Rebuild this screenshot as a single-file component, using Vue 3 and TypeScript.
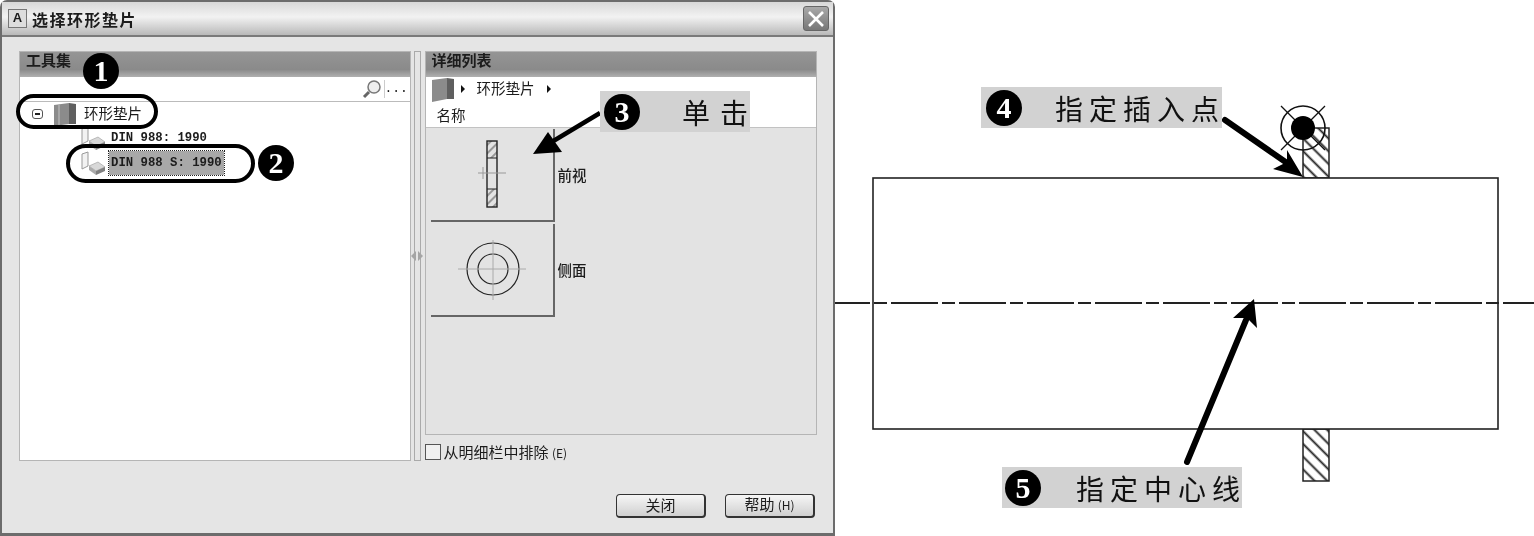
<script setup lang="ts">
const treeItems = [
  { id: 'din988', label: 'DIN 988: 1990', selected: false },
  { id: 'din988s', label: 'DIN 988 S: 1990', selected: true },
]
</script>

<template>
  <div class="page">
    <section class="dialog">
      <header class="titlebar">
        <span class="app-icon">A</span>
        <h1>选择环形垫片</h1>
        <button class="close-btn" aria-label="关闭">
          <svg width="18" height="18" viewBox="0 0 18 18">
            <path d="M2 2 L16 16 M16 2 L2 16" stroke="#fff" stroke-width="2.6" />
          </svg>
        </button>
      </header>

      <div class="body">
        <div class="columns">
          <div class="panel tools">
            <div class="panel-head">工具集</div>
            <div class="search-row">
              <svg width="20" height="20" viewBox="0 0 20 20">
                <circle cx="12" cy="8" r="6" fill="#eee" stroke="#777" stroke-width="1.5" />
                <path d="M7 13 L2 18" stroke="#666" stroke-width="3" />
              </svg>
              <span class="dots">...</span>
            </div>
            <div class="tree">
              <div class="tree-root">
                <span class="minus"></span>
                <svg class="book" width="24" height="24" viewBox="0 0 24 24">
                  <path d="M1 3 L16 1 L16 22 L1 24 Z" fill="#8b8b8b" />
                  <path d="M16 1 L23 2 L23 22 L16 22 Z" fill="#5f5f5f" />
                  <path d="M6 3 V23" stroke="#b0b0b0" stroke-width="1.5" />
                </svg>
                <span class="root-label">环形垫片</span>
              </div>
              <div
                v-for="item in treeItems"
                :key="item.id"
                class="tree-item"
                :class="{ selected: item.selected }"
              >
                <svg width="26" height="24" viewBox="0 0 26 24">
                  <path d="M2 3 L8 1 V15 L2 18 Z" fill="#f2f2f2" stroke="#999" />
                  <path d="M9 15 L18 11 L25 16 L16 20 Z" fill="#d8d8d8" stroke="#999" stroke-width="0.6" />
                  <path d="M16 20 L25 16 V20 L16 24 Z" fill="#808080" />
                  <path d="M9 15 L16 20 V24 L9 19 Z" fill="#aaa" />
                </svg>
                <span class="item-label">{{ item.label }}</span>
              </div>
            </div>
          </div>

          <div class="splitter">
            <svg width="14" height="10" viewBox="0 0 14 10">
              <path d="M6 0 V10 L1 5 Z M8 0 V10 L13 5 Z" fill="#a5a5a5" />
            </svg>
          </div>

          <div class="right-col">
            <div class="panel details">
              <div class="panel-head">详细列表</div>
              <div class="crumbs">
                <svg width="24" height="25" viewBox="0 0 24 25">
                  <path d="M1 3 L16 1 L16 22 L1 25 Z" fill="#8b8b8b" />
                  <path d="M16 1 L23 2 L23 22 L16 22 Z" fill="#5f5f5f" />
                </svg>
                <span class="tri"></span>
                <span class="crumb-text">环形垫片</span>
                <span class="tri"></span>
              </div>
              <div class="name-row">名称</div>
              <div class="thumbs">
                <div class="thumb-row">
                  <div class="thumb">
                    <svg width="122" height="90" viewBox="0 0 122 90">
                      <defs>
                        <pattern id="thumb-hatch" width="6" height="6" patternUnits="userSpaceOnUse" patternTransform="rotate(45)">
                          <path d="M3 0 V6" stroke="#666" stroke-width="1.2" />
                        </pattern>
                      </defs>
                      <rect x="56" y="12" width="10" height="17" fill="url(#thumb-hatch)" />
                      <rect x="56" y="60" width="10" height="18" fill="url(#thumb-hatch)" />
                      <rect x="56" y="12" width="10" height="66" fill="none" stroke="#222" stroke-width="1.4" />
                      <path d="M56 29 H66 M56 60 H66" stroke="#222" stroke-width="1.2" />
                      <path d="M47 44 H75 M52 38 V50" stroke="#999" stroke-width="1" />
                    </svg>
                  </div>
                  <span class="thumb-label">前视</span>
                </div>
                <div class="thumb-row">
                  <div class="thumb">
                    <svg width="122" height="91" viewBox="0 0 122 91">
                      <circle cx="62" cy="45" r="26" fill="none" stroke="#222" stroke-width="1.2" />
                      <circle cx="62" cy="45" r="15" fill="none" stroke="#222" stroke-width="1.2" />
                      <path d="M27 45 H95 M62 16 V76" stroke="#aaa" stroke-width="1" />
                    </svg>
                  </div>
                  <span class="thumb-label">侧面</span>
                </div>
              </div>
            </div>
            <label class="exclude">
              <span class="checkbox"></span>
              <span class="exclude-text">从明细栏中排除 <small>(E)</small></span>
            </label>
          </div>
        </div>

        <footer class="actions">
          <button class="btn">关闭</button>
          <button class="btn">帮助 <small>(H)</small></button>
        </footer>
      </div>
    </section>

    <!-- 右侧图纸 -->
    <svg class="drawing" width="699" height="536" viewBox="835 0 699 536">
      <defs>
        <pattern id="draw-hatch" width="9" height="9" patternUnits="userSpaceOnUse" patternTransform="rotate(-45)">
          <path d="M4.5 0 V9" stroke="#222" stroke-width="1.9" />
        </pattern>
      </defs>
      <rect x="1303" y="128" width="26" height="50" fill="url(#draw-hatch)" stroke="#222" stroke-width="1.5" />
      <rect x="1303" y="429" width="26" height="52" fill="url(#draw-hatch)" stroke="#222" stroke-width="1.5" />
      <rect x="873" y="178" width="625" height="251" fill="#fff" stroke="#222" stroke-width="1.6" />
      <path d="M835 303 H1534" stroke="#222" stroke-width="2" stroke-dasharray="47 4 13 4" stroke-dashoffset="12" />
      <circle cx="1303" cy="128" r="22" fill="none" stroke="#111" stroke-width="1.6" />
      <path d="M1281 106 L1325 150 M1325 106 L1281 150" stroke="#111" stroke-width="1.3" />
      <circle cx="1303" cy="128" r="12" fill="#000" />
    </svg>

    <!-- 标注 -->
    <svg class="arrows" width="1534" height="536" viewBox="0 0 1534 536">
      <path d="M600 113 L550 143" stroke="#000" stroke-width="4.5" />
      <path d="M533 154 L548 132 L555 142 L562 152 Z" fill="#000" />
      <path d="M1225 120 L1287 163" stroke="#000" stroke-width="6" stroke-linecap="round" />
      <path d="M1303 177 L1287 150 L1287 162 L1273 169 Z" fill="#000" />
      <path d="M1187 462 L1246 320" stroke="#000" stroke-width="6" stroke-linecap="round" />
      <path d="M1254 299 L1233 318 L1247 318 L1257 328 Z" fill="#000" />
    </svg>
    <span class="oval oval-root"></span>
    <span class="oval oval-item"></span>
    <span class="num num-1">1</span>
    <span class="num num-2">2</span>
    <div class="callout callout-3"><span class="num">3</span><span class="callout-text">单击</span></div>
    <div class="callout callout-4"><span class="num">4</span><span class="callout-text">指定插入点</span></div>
    <div class="callout callout-5"><span class="num">5</span><span class="callout-text">指定中心线</span></div>
  </div>
</template>

<style scoped>
.page {
  position: relative;
  display: flex;
  width: 1534px;
  height: 536px;
  overflow: hidden;
  background: #fff;
  color: #1c1c1c;
  font-family: "Noto Sans CJK SC", "Liberation Sans", sans-serif;
  filter: blur(0.35px);
}

.dialog {
  display: flex;
  flex-direction: column;
  flex: none;
  box-sizing: border-box;
  width: 835px;
  height: 536px;
  border: 2px solid #6c6c6c;
  border-bottom-width: 3px;
  border-radius: 7px 7px 0 0;
  background: #e5e5e5;
}

.titlebar {
  display: flex;
  align-items: center;
  flex: none;
  box-sizing: border-box;
  height: 35px;
  padding: 0 4px 0 6px;
  border-bottom: 2px solid #7a7a7a;
  background: linear-gradient(#d8d8d8, #f2f2f2 45%, #b9b9b9);
}

.app-icon {
  box-sizing: border-box;
  width: 19px;
  height: 19px;
  border: 1px solid #777;
  background: #ddd;
  font: bold 13px/15px "Liberation Sans", sans-serif;
  text-align: center;
}

.titlebar h1 {
  margin: 0 0 0 5px;
  font-size: 16px;
  font-weight: 700;
  letter-spacing: 1.5px;
}

.close-btn {
  display: flex;
  align-items: center;
  justify-content: center;
  width: 26px;
  height: 25px;
  margin-left: auto;
  padding: 0;
  border: 1px solid #666;
  border-radius: 3px;
  background: linear-gradient(#a9a9a9, #777);
}

.body {
  display: flex;
  flex-direction: column;
  flex: 1;
  padding: 14px 16px 0 17px;
}

.columns {
  display: flex;
  height: 410px;
}

.panel {
  box-sizing: border-box;
  border: 1px solid #b5b5b5;
}

.panel-head {
  box-sizing: border-box;
  flex: none;
  height: 25px;
  padding: 0 0 0 6px;
  background: linear-gradient(#959595, #8a8a8a 70%, #b0b0b0);
  font-size: 15px;
  font-weight: 700;
  line-height: 15px;
}

.tools {
  width: 392px;
  background: #fff;
}

.search-row {
  display: flex;
  align-items: center;
  justify-content: flex-end;
  gap: 2px;
  height: 24px;
  padding-right: 5px;
  border-bottom: 1px solid #bbb;
}

.dots {
  width: 20px;
  border-left: 1px solid #ccc;
  font: 13px/18px "Liberation Mono", monospace;
  text-align: center;
}

.tree {
  display: flex;
  flex-direction: column;
  font-size: 14.5px;
}

.tree-root {
  display: flex;
  align-items: center;
  height: 24px;
  padding-left: 12px;
}

.root-label {
  margin-bottom: 3px;
}

.minus {
  position: relative;
  box-sizing: border-box;
  width: 11px;
  height: 10px;
  border: 1px solid #555;
  border-radius: 3px;
}

.minus::after {
  content: "";
  position: absolute;
  left: 2px;
  top: 3px;
  width: 5px;
  height: 2px;
  background: #222;
}

.book {
  margin: 0 7px 0 10px;
}

.tree-item {
  display: flex;
  align-items: center;
  height: 23px;
  padding-left: 60px;
  font: bold 12.3px/18px "Liberation Mono", monospace;
}

.tree-item svg {
  flex: none;
  margin-right: 3px;
}

.tree-item.selected {
  height: 26px;
  margin-top: 1px;
}

.item-label {
  padding: 0 2px;
  white-space: pre;
}

.selected .item-label {
  padding: 3px 2px;
  outline: 1px dotted #222;
  background: #a8a8a8;
}

.splitter {
  display: flex;
  align-items: center;
  justify-content: center;
  box-sizing: border-box;
  width: 7px;
  height: 410px;
  margin: 0 4px 0 3px;
  border: 1px solid #aaa;
}

.splitter svg {
  flex: none;
}

.right-col {
  display: flex;
  flex-direction: column;
  width: 393px;
}

.details {
  display: flex;
  flex-direction: column;
  flex: none;
  height: 384px;
  background: #e3e3e3;
}

.crumbs {
  display: flex;
  align-items: center;
  flex: none;
  gap: 6px;
  height: 26px;
  padding: 0 0 2px 5px;
  box-sizing: border-box;
  background: #fff;
  font-size: 14.5px;
}

.crumb-text {
  margin: 0 6px 3px 6px;
}

.tri {
  width: 0;
  height: 0;
  border-left: 4px solid #111;
  border-top: 4px solid transparent;
  border-bottom: 4px solid transparent;
}

.name-row {
  box-sizing: border-box;
  flex: none;
  height: 25px;
  padding-left: 11px;
  border-bottom: 1px solid #c2c2c2;
  background: #fff;
  font-size: 14.5px;
  line-height: 23px;
}

.thumbs {
  display: flex;
  flex-direction: column;
  gap: 2px;
  padding: 1px 0 0 5px;
}

.thumb-row {
  display: flex;
  align-items: center;
  gap: 3px;
}

.thumb {
  box-sizing: border-box;
  width: 124px;
  height: 93px;
  border-right: 2px solid #666;
  border-bottom: 2px solid #666;
  background: #e3e3e3;
}

.thumb svg {
  display: block;
}

.thumb-label {
  margin-bottom: 2px;
  font-size: 14.5px;
  font-weight: 500;
}

.exclude {
  display: flex;
  align-items: center;
  flex: none;
  gap: 3px;
  height: 34px;
  font-size: 15px;
}

.exclude-text {
  margin-bottom: 2px;
}

small {
  font-size: 12px;
}

.checkbox {
  box-sizing: border-box;
  width: 16px;
  height: 16px;
  border: 1px solid #555;
  background: #f0f0f0;
}

.actions {
  display: flex;
  justify-content: flex-end;
  gap: 19px;
  margin-top: 33px;
  padding-right: 2px;
}

.btn {
  box-sizing: border-box;
  width: 90px;
  height: 24px;
  padding: 0 0 2px;
  border: 1px solid #333;
  border-right-width: 2px;
  border-bottom-width: 2px;
  border-radius: 4px;
  background: linear-gradient(#f6f6f6, #d0d0d0);
  color: #1c1c1c;
  font-family: inherit;
  font-size: 15px;
  line-height: 18px;
}

.drawing {
  display: block;
  flex: none;
}

.arrows {
  position: absolute;
  left: 0;
  top: 0;
  pointer-events: none;
}

.oval {
  position: absolute;
  box-sizing: border-box;
  border: 4px solid #000;
  border-radius: 18px;
}

.oval-root {
  left: 16px;
  top: 94px;
  width: 142px;
  height: 35px;
}

.oval-item {
  left: 66px;
  top: 144px;
  width: 189px;
  height: 39px;
  border-radius: 20px;
}

.num {
  display: flex;
  align-items: center;
  justify-content: center;
  flex: none;
  width: 36px;
  height: 36px;
  border-radius: 50%;
  background: #000;
  color: #fff;
  font: bold 30px/36px "Liberation Serif", serif;
}

.num-1,
.num-2 {
  position: absolute;
}

.num-1 {
  left: 83px;
  top: 53px;
}

.num-2 {
  left: 258px;
  top: 145px;
}

.callout {
  position: absolute;
  display: flex;
  align-items: center;
  box-sizing: border-box;
  height: 41px;
  background: #d2d2d2;
  color: #111;
  font-size: 28px;
  line-height: 36px;
  white-space: nowrap;
}

.callout-text {
  letter-spacing: 6px;
}

.callout-3 {
  left: 600px;
  top: 91px;
  width: 150px;
  padding-left: 4px;
}

.callout-3 .callout-text {
  margin-left: 42px;
  letter-spacing: 10px;
}

.callout-4 {
  left: 981px;
  top: 87px;
  width: 241px;
  padding-left: 5px;
}

.callout-4 .callout-text {
  margin-left: 33px;
}

.callout-5 {
  left: 1002px;
  top: 467px;
  width: 240px;
  padding-left: 3px;
}

.callout-5 .callout-text {
  margin-left: 35px;
}
</style>
